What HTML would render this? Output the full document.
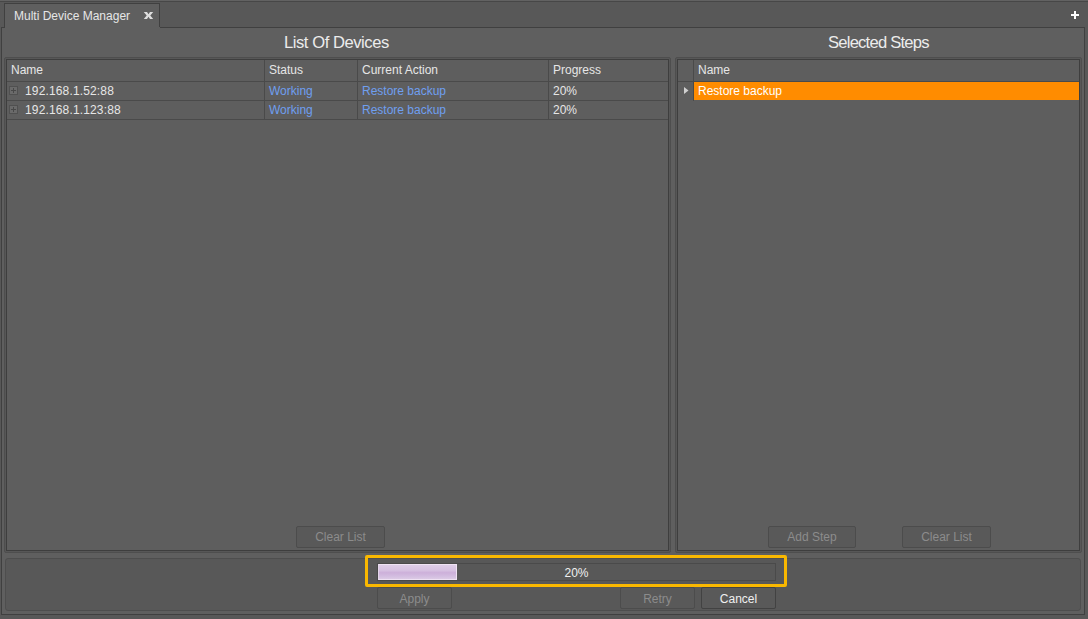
<!DOCTYPE html>
<html><head><meta charset="utf-8">
<style>
*{margin:0;padding:0;box-sizing:border-box}
html,body{width:1088px;height:619px;overflow:hidden;background:#585858;font-family:"Liberation Sans",sans-serif;}
.a{position:absolute}
.t{position:absolute;white-space:nowrap;font-size:12px;line-height:14px;color:#e6e6e6}
</style></head><body>
<!-- top lines -->
<div class="a" style="left:0;top:0;width:1088px;height:1px;background:#626262"></div>
<div class="a" style="left:0;top:1px;width:1088px;height:1px;background:#474747"></div>
<!-- tab -->
<div class="a" style="left:4px;top:3px;width:156px;height:25px;background:#5f5f5f;border:1px solid #404040;border-bottom:none"></div>
<div class="t" style="left:14px;top:9px;">Multi Device Manager</div>
<!-- close x -->
<svg class="a" style="left:138px;top:6px" width="20" height="18" viewBox="138 6 20 18"><path d="M143.8 12H147L148.5 14.3L150 12H153.2L150.3 15.5L153.2 19H150L148.5 16.7L147 19H143.8L146.7 15.5Z" fill="#dedede"/></svg>
<!-- plus -->
<svg class="a" style="left:1071px;top:11px" width="8" height="8" viewBox="0 0 8 8"><path d="M0 4H8M4 0V8" stroke="#ffffff" stroke-width="2"/></svg>
<!-- main frame -->
<div class="a" style="left:1px;top:27px;width:1084px;height:588px;background:#5f5f5f;border:1px solid #404040"></div>
<div class="a" style="left:5px;top:27px;width:155px;height:1px;background:#5f5f5f"></div>

<!-- titles -->
<div class="t" style="left:284px;top:33px;font-size:16.6px;line-height:19px;letter-spacing:-0.45px;color:#ececec">List Of Devices</div>
<div class="t" style="left:828px;top:33px;font-size:16.6px;line-height:19px;letter-spacing:-0.78px;color:#ececec">Selected Steps</div>

<!-- left table frame -->
<div class="a" style="left:4px;top:57px;width:667px;height:496px;border:1px solid #4e4e4e;border-radius:2px;background:#575757"></div>
<div class="a" style="left:6px;top:59px;width:663px;height:492px;border:1px solid #3e3e3e;background:#5e5e5e"></div>
<!-- right table frame -->
<div class="a" style="left:675px;top:57px;width:407px;height:496px;border:1px solid #4e4e4e;border-radius:2px;background:#575757"></div>
<div class="a" style="left:677px;top:59px;width:403px;height:492px;border:1px solid #3e3e3e;background:#5e5e5e"></div>

<!-- left table header -->
<div class="a" style="left:7px;top:60px;width:661px;height:21px;background:#5e5e5e"></div>
<div class="a" style="left:7px;top:81px;width:661px;height:1px;background:#4a4a4a"></div>
<div class="a" style="left:7px;top:100px;width:661px;height:1px;background:#4a4a4a"></div>
<div class="a" style="left:7px;top:119px;width:661px;height:1px;background:#4a4a4a"></div>
<div class="a" style="left:264px;top:60px;width:1px;height:59px;background:#4a4a4a"></div>
<div class="a" style="left:357px;top:60px;width:1px;height:59px;background:#4a4a4a"></div>
<div class="a" style="left:548px;top:60px;width:1px;height:59px;background:#4a4a4a"></div>

<div class="t" style="left:11px;top:63px;font-size:12px">Name</div>
<div class="t" style="left:269px;top:63px;font-size:12px">Status</div>
<div class="t" style="left:362px;top:63px;font-size:12px">Current Action</div>
<div class="t" style="left:553px;top:63px;font-size:12px">Progress</div>

<div class="a" style="left:9px;top:86px;width:9px;height:9px;border:1px solid #505050;background:#6a6a6a"></div>
<svg class="a" style="left:9px;top:86px" width="9" height="9" viewBox="0 0 9 9"><path d="M2 4.5H7M4.5 2V7" stroke="#484848" stroke-width="1"/></svg>
<div class="a" style="left:9px;top:105px;width:9px;height:9px;border:1px solid #505050;background:#6a6a6a"></div>
<svg class="a" style="left:9px;top:105px" width="9" height="9" viewBox="0 0 9 9"><path d="M2 4.5H7M4.5 2V7" stroke="#484848" stroke-width="1"/></svg>
<div class="t" style="left:25px;top:84px;letter-spacing:0.15px">192.168.1.52:88</div>
<div class="t" style="left:269px;top:84px;color:#6f9ff0">Working</div>
<div class="t" style="left:362px;top:84px;color:#6f9ff0">Restore backup</div>
<div class="t" style="left:553px;top:84px">20%</div>
<div class="t" style="left:25px;top:103px;letter-spacing:0.15px">192.168.1.123:88</div>
<div class="t" style="left:269px;top:103px;color:#6f9ff0">Working</div>
<div class="t" style="left:362px;top:103px;color:#6f9ff0">Restore backup</div>
<div class="t" style="left:553px;top:103px">20%</div>

<!-- right table header -->
<div class="a" style="left:678px;top:60px;width:401px;height:21px;background:#5e5e5e"></div>
<div class="a" style="left:678px;top:81px;width:401px;height:1px;background:#4a4a4a"></div>
<div class="a" style="left:693px;top:60px;width:1px;height:41px;background:#4a4a4a"></div>
<div class="t" style="left:698px;top:63px">Name</div>
<div class="a" style="left:694px;top:82px;width:385px;height:18px;background:#ff8c00"></div>
<div class="t" style="left:698px;top:84px;color:#ffffff">Restore backup</div>
<svg class="a" style="left:683px;top:86px" width="8" height="10" viewBox="0 0 8 10"><path d="M1 1L5.5 4.5L1 8Z" fill="#d0d0d0"/></svg>

<!-- buttons -->
<div class="a" style="left:296px;top:526px;width:89px;height:22px;border:1px solid #4c4c4c;border-radius:2px;background:#595959"></div>
<div class="t" style="left:296px;top:530px;width:89px;text-align:center;color:#8c8c8c">Clear List</div>
<div class="a" style="left:768px;top:526px;width:88px;height:22px;border:1px solid #4c4c4c;border-radius:2px;background:#595959"></div>
<div class="t" style="left:768px;top:530px;width:88px;text-align:center;color:#8c8c8c">Add Step</div>
<div class="a" style="left:902px;top:526px;width:89px;height:22px;border:1px solid #4c4c4c;border-radius:2px;background:#595959"></div>
<div class="t" style="left:902px;top:530px;width:89px;text-align:center;color:#8c8c8c">Clear List</div>

<!-- bottom panel -->
<div class="a" style="left:5px;top:558px;width:1076px;height:53px;border:1px solid #4e4e4e;border-radius:3px;background:#585858"></div>
<!-- progress highlight -->
<div class="a" style="left:365px;top:555px;width:422px;height:32px;border:3px solid #fab800;border-radius:2px"></div>
<div class="a" style="left:377px;top:563px;width:399px;height:18px;border:1px solid #4a4a4a;background:#585858"></div>
<div class="a" style="left:378px;top:564px;width:79px;height:16px;border:1px solid #efe2f3;border-left-color:#e4d6ea;background:linear-gradient(#ddcde7 0%,#d6c0e1 40%,#cdb0da 55%,#d3bde0 80%,#dccae5 100%)"></div>
<div class="t" style="left:377px;top:566px;width:399px;text-align:center;color:#f0f0f0">20%</div>

<div class="a" style="left:377px;top:587px;width:75px;height:22px;border:1px solid #4c4c4c;border-radius:2px;background:#595959"></div>
<div class="t" style="left:377px;top:592px;width:75px;text-align:center;color:#8c8c8c">Apply</div>
<div class="a" style="left:620px;top:587px;width:75px;height:22px;border:1px solid #4c4c4c;border-radius:2px;background:#595959"></div>
<div class="t" style="left:620px;top:592px;width:75px;text-align:center;color:#8c8c8c">Retry</div>
<div class="a" style="left:701px;top:587px;width:75px;height:22px;border:1px solid #424242;border-radius:2px;background:#595959"></div>
<div class="t" style="left:701px;top:592px;width:75px;text-align:center;color:#f0f0f0">Cancel</div>
</body></html>
